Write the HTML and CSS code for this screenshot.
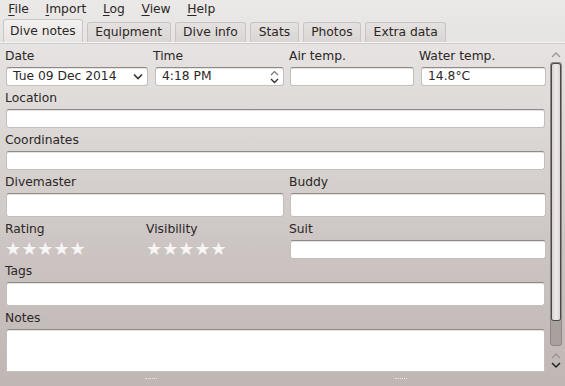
FILE: index.html
```html
<!DOCTYPE html>
<html lang="en">
<head>
    <meta charset="UTF-8">
    <title>Subsurface - Dive notes</title>
    <link rel="stylesheet" href="styles.css">
</head>
<body>
    <div class="menubar">
        <span class="menu"><u>F</u>ile</span>
        <span class="menu"><u>I</u>mport</span>
        <span class="menu"><u>L</u>og</span>
        <span class="menu"><u>V</u>iew</span>
        <span class="menu"><u>H</u>elp</span>
    </div>

    <div class="tabs">
        <div class="tab active">Dive notes</div>
        <div class="tab">Equipment</div>
        <div class="tab">Dive info</div>
        <div class="tab">Stats</div>
        <div class="tab">Photos</div>
        <div class="tab">Extra data</div>
    </div>

    <div class="page">
        <div class="form">
            <div class="row row-top">
                <div class="field">
                    <div class="label">Date</div>
                    <div class="input combo">Tue 09 Dec 2014
                        <svg class="combo-arrow" width="10" height="7" viewBox="0 0 10 7"><path d="M1 1.5 L5 5.5 L9 1.5" fill="none" stroke="#333" stroke-width="1.6"/></svg>
                    </div>
                </div>
                <div class="field">
                    <div class="label">Time</div>
                    <div class="input combo">4:18 PM
                        <svg class="spin" width="9" height="14" viewBox="0 0 9 14"><path d="M1 5 L4.5 1.5 L8 5" fill="none" stroke="#777" stroke-width="1.2"/><path d="M1 9 L4.5 12.5 L8 9" fill="none" stroke="#333" stroke-width="1.4"/></svg>
                    </div>
                </div>
                <div class="field">
                    <div class="label">Air temp.</div>
                    <div class="input"></div>
                </div>
                <div class="field">
                    <div class="label">Water temp.</div>
                    <div class="input">14.8°C</div>
                </div>
            </div>

            <div class="field">
                <div class="label">Location</div>
                <div class="input"></div>
            </div>

            <div class="field">
                <div class="label">Coordinates</div>
                <div class="input"></div>
            </div>

            <div class="row row-half">
                <div class="field">
                    <div class="label">Divemaster</div>
                    <div class="input tall"></div>
                </div>
                <div class="field">
                    <div class="label">Buddy</div>
                    <div class="input tall"></div>
                </div>
            </div>

            <div class="row row-rating">
                <div class="field">
                    <div class="label">Rating</div>
                    <div class="stars">★★★★★</div>
                </div>
                <div class="field">
                    <div class="label">Visibility</div>
                    <div class="stars">★★★★★</div>
                </div>
                <div class="field">
                    <div class="label">Suit</div>
                    <div class="input"></div>
                </div>
            </div>

            <div class="field">
                <div class="label">Tags</div>
                <div class="input tall"></div>
            </div>

            <div class="field">
                <div class="label">Notes</div>
                <div class="input notes"></div>
            </div>
        </div>

        <div class="scrollbar">
            <svg class="arrow-top" width="10" height="6" viewBox="0 0 10 6"><path d="M1 5 L5 1 L9 5" fill="none" stroke="#9a9492" stroke-width="1.3"/></svg>
            <div class="trough">
                <div class="handle"></div>
            </div>
            <svg class="arrows-bottom" width="10" height="16" viewBox="0 0 10 16"><path d="M1 5 L5 1 L9 5" fill="none" stroke="#9a9492" stroke-width="1.3"/><path d="M1 10 L5 14 L9 10" fill="none" stroke="#222" stroke-width="1.5"/></svg>
        </div>
    </div>

    <div class="splitter">
        <span class="grip grip-left"></span>
        <span class="grip grip-right"></span>
    </div>
</body>
</html>
```

FILE: styles.css
```css
html, body {
    margin: 0;
    height: 100%;
}
body {
    font-family: "DejaVu Sans", sans-serif;
    font-size: 12.3px;
    color: #2b2726;
    background: linear-gradient(#ebe9e8 0%, #dbd7d5 35%, #cbc4c2 65%, #c0b7b4 100%);
    overflow: hidden;
}
.menubar {
    display: flex;
    height: 19px;
    line-height: 18px;
}
.menu {
    padding: 0 8.3px;
}
.menu u {
    text-decoration-thickness: 1px;
    text-underline-offset: 2px;
}
.tabs {
    display: flex;
    align-items: flex-end;
    height: 23px;
    padding-left: 3px;
    border-bottom: 1px solid #f6f5f4;
    box-shadow: 0 1px 0 #cfcac8;
}
.tab {
    height: 19px;
    line-height: 19px;
    padding: 0 7.5px;
    margin-right: 4px;
    background: linear-gradient(#e4e1e0, #d9d5d3);
    border: 1px solid #c9c4c2;
    border-bottom: none;
    border-radius: 3px 3px 0 0;
}
.tab.active {
    height: 22px;
    line-height: 22px;
    padding: 0 6px;
    background: linear-gradient(#f2f1f0, #e8e6e5);
    border-color: #cbc6c4;
}
.page {
    display: flex;
    height: 331px;
}
.form {
    flex: 1;
    padding: 4px 0 0 5px;
}
.row {
    display: grid;
}
.row-top {
    grid-template-columns: 148px 136px 130px 128px;
}
.row-half {
    grid-template-columns: 284px 258px;
}
.row-rating {
    grid-template-columns: 141px 143px 258px;
}
.field {
    margin-bottom: 3px;
}
.label {
    height: 18px;
    line-height: 18px;
    margin-bottom: 2px;
}
.input {
    box-sizing: border-box;
    height: 19px;
    line-height: 17px;
    margin: 0 2px 0 1px;
    padding: 0 6px;
    background: #fff;
    border: 1px solid #c4bfbd;
    border-top-color: #8f8a88;
    border-radius: 3px;
    box-shadow: inset 0 1px 0 #e6e4e3;
}
.row .field .input {
    margin-right: 5px;
}
.row .field:last-child .input {
    margin: 0 1px 0 1px;
}
.row-top .field:nth-child(2) .input {
    margin-left: 2px;
}
.row-top .field:last-child .input {
    margin-left: 2px;
}
.input.tall {
    height: 24px;
}
.input.notes {
    height: 43px;
    border-radius: 3px 3px 0 0;
}
.combo {
    display: flex;
    align-items: center;
    justify-content: space-between;
    padding-right: 4px;
}
.spin {
    margin-top: 1px;
}
.stars {
    height: 18px;
    line-height: 17px;
    font-size: 18px;
    letter-spacing: 0;
    color: #f7f5f5;
    text-shadow: 0 0 2px #cfc7c5;
}
.scrollbar {
    width: 14px;
    margin: 0 2px 0 2px;
    display: flex;
    flex-direction: column;
    align-items: center;
}
.arrow-top {
    margin-top: 9px;
    margin-bottom: 4px;
}
.trough {
    box-sizing: border-box;
    width: 12px;
    height: 284px;
    background: #a9a19e;
    border: 1px solid #8d8684;
    border-radius: 3px;
    padding: 1px;
}
.handle {
    height: 256px;
    background: linear-gradient(90deg, #d6d2d0, #eceae9 50%, #d8d4d2);
    border-radius: 2px;
    box-shadow: 0 0 0 1px #4e4846;
}
.arrows-bottom {
    margin-top: 7px;
}
.splitter {
    position: relative;
    height: 12px;
}
.grip {
    position: absolute;
    top: 4px;
    width: 12px;
    height: 1px;
    border-top: 1px dotted #ece8e7;
}
.grip-left {
    left: 145px;
}
.grip-right {
    left: 395px;
}
```
